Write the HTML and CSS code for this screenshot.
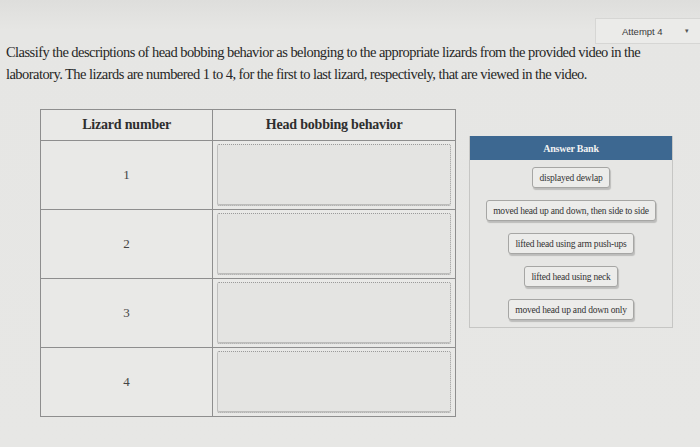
FILE: index.html
```html
<!DOCTYPE html>
<html>
<head>
<meta charset="utf-8">
<link rel="stylesheet" href="styles.css">
</head>
<body>
<div class="page">
  <div class="topbar">
    <div class="attempt"><span class="attempt-text">Attempt 4</span><span class="caret">&#9662;</span></div>
  </div>
  <p class="prompt">Classify the descriptions of head bobbing behavior as belonging to the appropriate lizards from the provided video in the laboratory. The lizards are numbered 1 to 4, for the first to last lizard, respectively, that are viewed in the video.</p>
  <div class="work">
    <table class="grid">
      <thead>
        <tr><th class="c1">Lizard number</th><th class="c2">Head bobbing behavior</th></tr>
      </thead>
      <tbody>
        <tr><td class="num">1</td><td class="slot"><div class="drop"></div></td></tr>
        <tr><td class="num">2</td><td class="slot"><div class="drop"></div></td></tr>
        <tr><td class="num">3</td><td class="slot"><div class="drop"></div></td></tr>
        <tr><td class="num">4</td><td class="slot"><div class="drop"></div></td></tr>
      </tbody>
    </table>
    <div class="bank">
      <div class="bank-head">Answer Bank</div>
      <div class="bank-body">
        <div class="chip">displayed dewlap</div>
        <div class="chip">moved head up and down, then side to side</div>
        <div class="chip">lifted head using arm push-ups</div>
        <div class="chip">lifted head using neck</div>
        <div class="chip">moved head up and down only</div>
      </div>
    </div>
  </div>
</div>
</body>
</html>
```
FILE: styles.css
```css
html, body {
  margin: 0;
  padding: 0;
  background: #e5e5e3;
}
.page {
  width: 700px;
  height: 447px;
  overflow: hidden;
  font-family: "Liberation Serif", "Times New Roman", serif;
  color: #2a2a2a;
  background: linear-gradient(180deg, #dededc 0px, #e6e6e4 30px, #e7e7e5 100%);
}
.topbar {
  display: flex;
  justify-content: flex-end;
  padding-top: 18px;
  height: 24px;
}
.attempt {
  width: 104px;
  height: 24px;
  background: #ebebe9;
  border: 1px solid #d6d6d4;
  border-right: none;
  display: flex;
  align-items: center;
  font-family: "Liberation Sans", Arial, sans-serif;
  font-size: 9.5px;
  color: #3a3a3a;
}
.attempt-text {
  margin-left: 26px;
}
.caret {
  margin-left: 22px;
  font-size: 7px;
  color: #555;
}
.prompt {
  margin: -1px 40px 0 6px;
  font-size: 14.5px;
  line-height: 22px;
  letter-spacing: -0.55px;
  color: #262626;
}
.work {
  display: flex;
  align-items: flex-start;
  margin-top: 24px;
  padding-left: 40px;
}
.grid {
  border-collapse: collapse;
  width: 416px;
  background: #e9e9e7;
}
.grid th, .grid td {
  border: 1px solid #8e8e8e;
  padding: 0;
}
.grid th {
  height: 30px;
  font-size: 14px;
  font-weight: bold;
  color: #2e2e2e;
  letter-spacing: -0.2px;
}
.c1 { width: 172px; }
.c2 { width: 243px; }
.num {
  height: 68px;
  text-align: center;
  font-size: 13px;
  color: #444;
}
.slot {
  padding: 3px 4px !important;
}
.drop {
  height: 60px;
  border: 1px dotted #9a9a9a;
  border-radius: 2px;
  background: #e4e4e2;
  box-shadow: inset 0 -1px 0 #bdbdbb;
}
.bank {
  margin-left: 13px;
  margin-top: 27px;
  width: 202px;
  border: 1px solid #c6c6c4;
  border-top: none;
  background: #e6e6e4;
}
.bank-head {
  height: 24px;
  background: #3d6891;
  color: #f2f2f2;
  font-size: 10px;
  font-weight: bold;
  display: flex;
  align-items: center;
  justify-content: center;
  letter-spacing: -0.2px;
}
.bank-body {
  display: flex;
  flex-direction: column;
  align-items: center;
  gap: 12px;
  padding: 7px 0 7px;
}
.chip {
  height: 19px;
  padding: 0 6px;
  display: flex;
  align-items: center;
  font-size: 9.5px;
  letter-spacing: -0.2px;
  color: #333;
  background: #ececea;
  border: 1px solid #a6a6a4;
  border-radius: 3px;
  box-shadow: 1px 2px 1px rgba(0,0,0,0.18);
}
```
